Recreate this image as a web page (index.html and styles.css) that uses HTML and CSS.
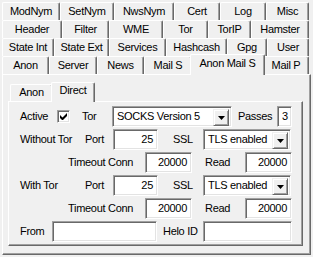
FILE: index.html
```html
<!DOCTYPE html>
<html>
<head>
    <meta charset="utf-8">
    <link rel="stylesheet" href="styles.css">
</head>
<body>
    <div class="window">
        <div class="tab_row row1">
            <div class="tab">ModNym</div>
            <div class="tab">SetNym</div>
            <div class="tab">NwsNym</div>
            <div class="tab">Cert</div>
            <div class="tab">Log</div>
            <div class="tab">Misc</div>
        </div>
        <div class="tab_row row2">
            <div class="tab">Header</div>
            <div class="tab">Filter</div>
            <div class="tab">WME</div>
            <div class="tab">Tor</div>
            <div class="tab">TorIP</div>
            <div class="tab">Hamster</div>
        </div>
        <div class="tab_row row3">
            <div class="tab">State Int</div>
            <div class="tab">State Ext</div>
            <div class="tab">Services</div>
            <div class="tab">Hashcash</div>
            <div class="tab">Gpg</div>
            <div class="tab">User</div>
        </div>
        <div class="tab_row row4">
            <div class="tab">Anon</div>
            <div class="tab">Server</div>
            <div class="tab">News</div>
            <div class="tab">Mail S</div>
            <div class="tab selected">Anon Mail S</div>
            <div class="tab">Mail P</div>
        </div>

        <div class="page">
            <div class="inner_tabs">
                <div class="tab t_anon">Anon</div>
                <div class="tab t_direct selected">Direct</div>
            </div>
            <div class="inner_page">
                <div class="row">
                    <span class="lbl w37">Active</span>
                    <span class="check">
                        <svg width="7" height="7" viewBox="0 0 7 7"><path d="M0 2v3l2 2h1l4-4V0L2.5 4.5z" fill="#000"/></svg>
                    </span>
                    <span class="lbl w30 ml12">Tor</span>
                    <div class="combo w120">
                        <span class="val">SOCKS Version 5</span>
                        <span class="btn"><svg width="7" height="4" viewBox="0 0 7 4"><path d="M0 0h7L3.5 4z" fill="#000"/></svg></span>
                    </div>
                    <span class="lbl w39 ml6">Passes</span>
                    <span class="edit w15">3</span>
                </div>
                <div class="row">
                    <span class="lbl w65">Without Tor</span>
                    <span class="lbl w28">Port</span>
                    <span class="edit w45">25</span>
                    <span class="lbl w30 ml15">SSL</span>
                    <div class="combo w88">
                        <span class="val">TLS enabled</span>
                        <span class="btn"><svg width="7" height="4" viewBox="0 0 7 4"><path d="M0 0h7L3.5 4z" fill="#000"/></svg></span>
                    </div>
                </div>
                <div class="row">
                    <span class="lbl w40 ml48">Timeout</span>
                    <span class="lbl w37">Conn</span>
                    <span class="edit w47">20000</span>
                    <span class="lbl w40 ml13">Read</span>
                    <span class="edit w47">20000</span>
                </div>
                <div class="row">
                    <span class="lbl w65">With Tor</span>
                    <span class="lbl w28">Port</span>
                    <span class="edit w45">25</span>
                    <span class="lbl w30 ml15">SSL</span>
                    <div class="combo w88">
                        <span class="val">TLS enabled</span>
                        <span class="btn"><svg width="7" height="4" viewBox="0 0 7 4"><path d="M0 0h7L3.5 4z" fill="#000"/></svg></span>
                    </div>
                </div>
                <div class="row">
                    <span class="lbl w40 ml48">Timeout</span>
                    <span class="lbl w37">Conn</span>
                    <span class="edit w47">20000</span>
                    <span class="lbl w40 ml13">Read</span>
                    <span class="edit w47">20000</span>
                </div>
                <div class="row">
                    <span class="lbl w32">From</span>
                    <span class="edit w105"></span>
                    <span class="lbl w40 ml6">Helo ID</span>
                    <span class="edit w89"></span>
                </div>
            </div>
        </div>
    </div>
</body>
</html>
```

FILE: styles.css
```css
html {
    box-sizing: border-box;
}

*, *:before, *:after {
    box-sizing: inherit;
}

body {
    margin: 0;
    background: #f0f0f0;
    font-family: 'Liberation Sans', Arial, sans-serif;
    font-size: 11px;
    letter-spacing: -0.3px;
    color: #000;
    line-height: 1;
}

.window {
    padding: 2px 0 0 2px;
}

/* tab rows, widths like the Delphi control */
.tab_row {
    display: grid;
    width: 307px;
    height: 18px;
}

.row1 { grid-template-columns: 58px 54px 60px 46px 46px 43px; }
.row2 { grid-template-columns: 60px 47px 54px 45px 43px 58px; }
.row3 { grid-template-columns: 52px 55px 57px 61px 40px 42px; }
.row4 { grid-template-columns: 47px 48px 47px 48px 71px 46px; }

.tab {
    height: 18px;
    border-top: 1px solid #fff;
    border-left: 1px solid #fff;
    border-right: 1px solid #696969;
    border-radius: 2px 2px 0 0;
    box-shadow: inset -1px 0 #a0a0a0;
    background: #f0f0f0;
    text-align: center;
    line-height: 16px;
    white-space: nowrap;
}

    .tab.selected {
        position: relative;
        z-index: 1;
        height: 21px;
        margin: -2px -2px 0 -2px;
    }

.page {
    width: 309px;
    height: 181px;
    border: 1px solid;
    border-color: #fff #696969 #696969 #fff;
    box-shadow: inset -1px -1px #a0a0a0;
    padding: 9px 0 0 5px;
}

.inner_tabs {
    display: flex;
    height: 17px;
    margin-left: 2px;
}

    .inner_tabs .tab {
        height: 17px;
        line-height: 15px;
    }

    .inner_tabs .t_anon { width: 43px; }
    .inner_tabs .t_direct { width: 40px; }

    .inner_tabs .tab.selected {
        width: 44px;
        height: 20px;
        margin: -2px -2px 0 -2px;
    }

.inner_page {
    width: 295px;
    height: 145px;
    border: 1px solid;
    border-color: #fff #696969 #696969 #fff;
    box-shadow: inset -1px -1px #a0a0a0;
    padding: 4px 0 0 11px;
}

.row {
    display: flex;
    align-items: center;
    height: 21px;
    margin-bottom: 2px;
}

.lbl {
    flex: none;
    white-space: nowrap;
}

.edit, .combo, .check {
    flex: none;
    background: #fff;
    border: 1px solid;
    border-color: #a0a0a0 #fff #fff #a0a0a0;
    box-shadow: inset 1px 1px #696969, inset -1px -1px #e3e3e3;
}

.edit {
    height: 21px;
    padding: 0 4px;
    line-height: 19px;
    text-align: right;
}

.check {
    width: 13px;
    height: 13px;
    display: flex;
    align-items: center;
    justify-content: center;
}

.combo {
    display: flex;
    height: 21px;
    padding: 2px;
}

    .combo .val {
        flex: 1;
        padding-left: 2px;
        line-height: 15px;
        white-space: nowrap;
        overflow: hidden;
    }

    .combo .btn {
        width: 16px;
        height: 17px;
        background: #f0f0f0;
        border: 1px solid;
        border-color: #f0f0f0 #696969 #696969 #f0f0f0;
        box-shadow: inset 1px 1px #fff, inset -1px -1px #a0a0a0;
        display: flex;
        align-items: center;
        justify-content: center;
    }

.w15 { width: 15px; }
.w28 { width: 28px; }
.w30 { width: 30px; }
.w32 { width: 32px; }
.w37 { width: 37px; }
.w39 { width: 39px; }
.w40 { width: 40px; }
.w45 { width: 45px; }
.w47 { width: 47px; }
.w65 { width: 65px; }
.w88 { width: 88px; }
.w89 { width: 89px; }
.w105 { width: 105px; }
.w120 { width: 120px; }

.ml6 { margin-left: 6px; }
.ml12 { margin-left: 12px; }
.ml13 { margin-left: 13px; }
.ml15 { margin-left: 15px; }
.ml48 { margin-left: 48px; }
```
